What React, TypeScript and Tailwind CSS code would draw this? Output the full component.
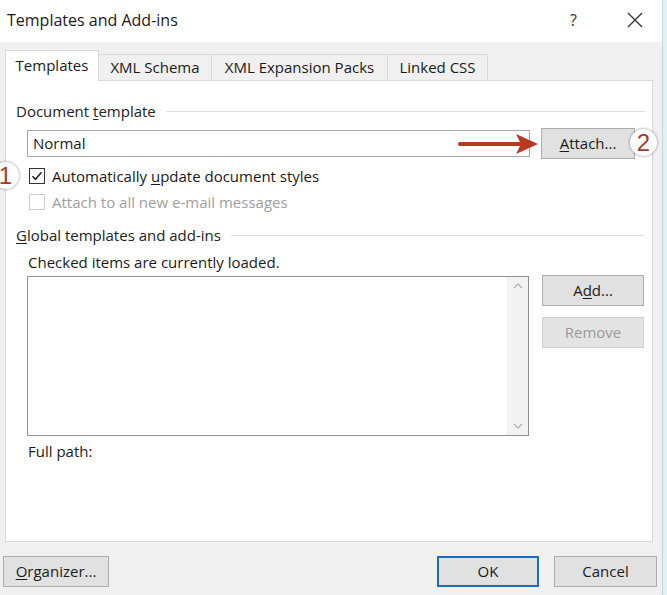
import React from 'react'

const font = "font-['Segoe_UI','Open_Sans','Noto_Sans',sans-serif]"

function Btn({ children, w, disabled, primary }: { children: React.ReactNode; w: string; disabled?: boolean; primary?: boolean }) {
	return (
		<div
			className={[
				'flex items-center justify-center h-[31px] text-[15px]',
				w,
				primary ? 'border-2 border-[#1a6fbd] bg-[#e1e1e1]' : disabled ? 'border border-[#cfcfcf] bg-[#e4e4e4]' : 'border border-[#adadad] bg-[#e1e1e1]',
				disabled ? 'text-[#9a9a9a]' : 'text-[#1a1a1a]',
			].join(' ')}
		>
			{children}
		</div>
	)
}

function GroupHeader({ children }: { children: React.ReactNode }) {
	return (
		<div className="flex items-center h-[20px] pr-[7px] gap-[10px]">
			<span className="text-[15px] text-[#222] whitespace-nowrap">{children}</span>
			<div className="flex-1 h-px bg-[#dedede]" />
		</div>
	)
}

function Badge({ n }: { n: string }) {
	return (
		<div className="w-[27px] h-[27px] rounded-full bg-white shadow-[0_0_3px_rgba(0,0,0,0.45)] flex items-center justify-center text-[24px] leading-none text-[#a63a2c] font-['Liberation_Sans',sans-serif]">
			{n}
		</div>
	)
}

export default function App() {
	return (
		<div className={`w-[667px] h-[595px] flex bg-[#f0f0f0] text-[#1a1a1a] ${font}`}>
			<div className="relative flex flex-col w-[662px]">
				{/* TITLE BAR */}
				<div className="flex items-center h-[42px] bg-white pl-[7px] pb-[3px]">
					<span className="text-[16px]">Templates and Add-ins</span>
					<span className="ml-auto mr-[50px] text-[16px] text-[#333]">?</span>
					<svg width="16" height="16" viewBox="0 0 16 16" className="mr-[19px]">
						<path d="M1 1L15 15M15 1L1 15" stroke="#333" strokeWidth="1.4" />
					</svg>
				</div>

				{/* TABS */}
				<div className="flex items-end h-[38px] pl-[5px] text-[15px]">
					<div className="relative z-10 flex items-center justify-center w-[94px] h-[31px] -mb-px pb-[2px] bg-white border border-b-0 border-[#d9d9d9]">
						Templates
					</div>
					<div className="flex items-center justify-center w-[113px] h-[26px] border border-l-0 border-b-0 border-[#d9d9d9]">
						XML Schema
					</div>
					<div className="flex items-center justify-center w-[176px] h-[26px] border border-l-0 border-b-0 border-[#d9d9d9]">
						XML Expansion Packs
					</div>
					<div className="flex items-center justify-center w-[100px] h-[26px] border border-l-0 border-b-0 border-[#d9d9d9]">
						Linked CSS
					</div>
				</div>

				{/* PANEL */}
				<div className="ml-[5px] w-[648px] h-[462px] bg-white border border-[#d9d9d9] pl-[10px] pt-[20px]">
					<GroupHeader>
						Document <span className="underline underline-offset-2">t</span>emplate
					</GroupHeader>

					<div className="flex items-center mt-[7px] ml-[11px] h-[30px]">
						<div className="flex items-center w-[503px] h-[27px] border border-[#a8a8a8] pl-[5px] text-[15px]">Normal</div>
						<Btn w="w-[94px] ml-[11px] h-[30px]">
							<span className="underline underline-offset-2">A</span>ttach...
						</Btn>
					</div>

					<div className="flex items-center h-[20px] mt-[8px] ml-[13px] gap-[7px]">
						<div className="flex items-center justify-center w-[16px] h-[16px] border border-[#333] bg-white">
							<svg width="12" height="12" viewBox="0 0 12 12">
								<path d="M1.5 6.2L4.5 9.3L10.5 2.2" fill="none" stroke="#222" strokeWidth="1.5" />
							</svg>
						</div>
						<span className="text-[15px]">
							Automatically <span className="underline underline-offset-2">u</span>pdate document styles
						</span>
					</div>

					<div className="flex items-center h-[20px] mt-[6px] ml-[13px] gap-[7px]">
						<div className="w-[16px] h-[16px] border border-[#cccccc] bg-white" />
						<span className="text-[15px] text-[#a0a0a0]">Attach to all new e-mail messages</span>
					</div>

					<div className="mt-[13px]">
						<GroupHeader>
							<span className="underline underline-offset-2">G</span>lobal templates and add-ins
						</GroupHeader>
					</div>

					<div className="flex items-center h-[20px] mt-[7px] ml-[12px] text-[15px]">Checked items are currently loaded.</div>

					<div className="flex items-start mt-[3px] ml-[11px]">
						<div className="flex justify-end w-[502px] h-[160px] mt-px border border-[#8e8e8e] bg-white">
							<div className="flex flex-col items-center justify-between w-[21px] h-full bg-[#f3f3f3] py-[6px]">
								<svg width="10" height="6" viewBox="0 0 10 6">
									<path d="M1 5L5 1L9 5" fill="none" stroke="#b0b0b0" strokeWidth="1.3" />
								</svg>
								<svg width="10" height="6" viewBox="0 0 10 6">
									<path d="M1 1L5 5L9 1" fill="none" stroke="#b0b0b0" strokeWidth="1.3" />
								</svg>
							</div>
						</div>
						<div className="flex flex-col gap-[11px] ml-[13px]">
							<Btn w="w-[102px]">
								A<span className="underline underline-offset-2">d</span>d...
							</Btn>
							<Btn w="w-[102px]" disabled>
								Remove
							</Btn>
						</div>
					</div>

					<div className="flex items-center h-[20px] mt-[5px] ml-[12px] text-[15px]">Full path:</div>
				</div>

				{/* FOOTER */}
				<div className="flex items-center pt-[14px] pl-[3px]">
					<Btn w="w-[106px]">
						<span className="underline underline-offset-2">O</span>rganizer...
					</Btn>
					<Btn w="w-[102px] ml-auto" primary>
						OK
					</Btn>
					<Btn w="w-[103px] ml-[15px] mr-[5px]">Cancel</Btn>
				</div>

				{/* ANNOTATIONS */}
				<div className="absolute left-[-8px] top-[162px]">
					<Badge n="1" />
				</div>
				<div className="absolute left-[630px] top-[129px]">
					<Badge n="2" />
				</div>
				<svg className="absolute left-[458px] top-[132px]" width="82" height="24" viewBox="0 0 82 24">
					<path d="M2 12H62" stroke="#b8391f" strokeWidth="4" strokeLinecap="round" />
					<path d="M58 2L80 12L58 22L63 12Z" fill="#b8391f" />
				</svg>
			</div>
			<div className="w-[5px] bg-[#e6f0f4] border-l border-[#bcd7e4]" />
		</div>
	)
}
